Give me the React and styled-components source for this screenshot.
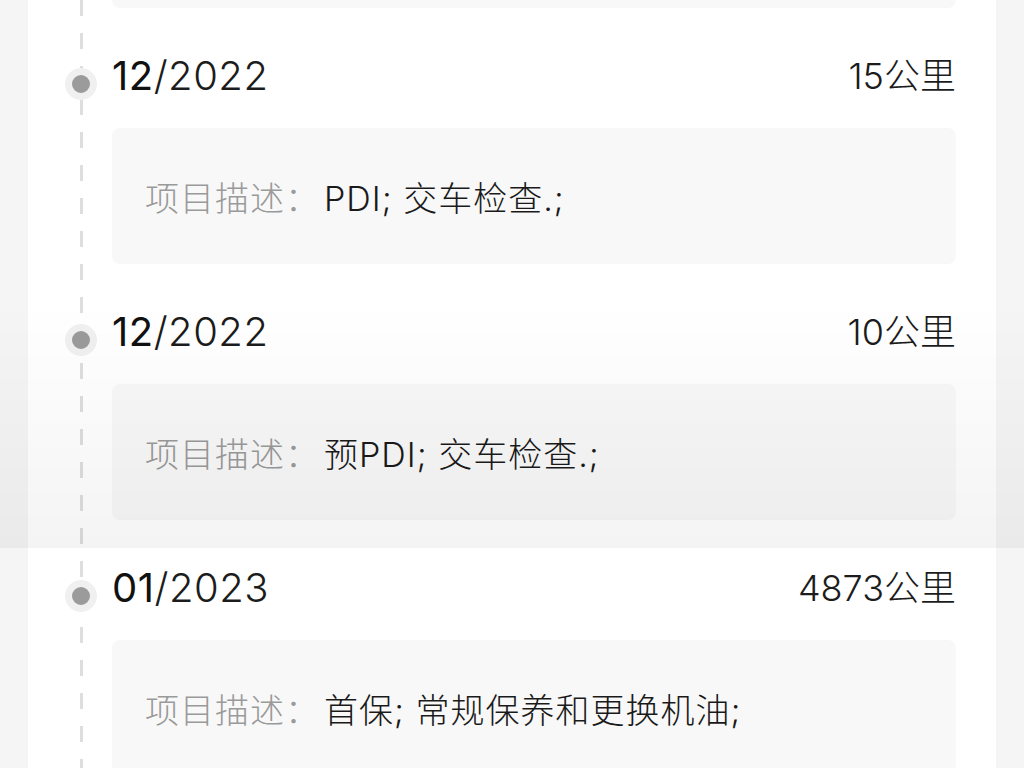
import React from "react";
import styled, { createGlobalStyle } from "styled-components";

const GlobalStyle = createGlobalStyle`
  html, body {
    margin: 0;
    background: #f5f5f5;
  }
  body {
    font-family: Inter, "Noto Sans CJK SC", sans-serif;
    overflow: hidden;
    -webkit-font-smoothing: antialiased;
  }
`;

const Page = styled.div`
  padding: 0 28px;
`;

/* White record card with the dashed timeline rail drawn as its background */
const Card = styled.div`
  padding: 0 40px 40px 37px;
  background-color: #fff;
  background-image: linear-gradient(#dedede 50%, transparent 50%);
  background-size: 3px 33px;
  background-position: 52px 0;
  background-repeat: repeat-y;
`;

/* Bottom edge of the record above, scrolled mostly out of view */
const PrevTail = styled.div`
  margin-left: 47px;
  height: 8px;
  background: #f8f8f8;
  border-radius: 0 0 8px 8px;
`;

const Entry = styled.section`
  display: grid;
  grid-template-columns: 32px 1fr;
  grid-template-rows: 56px 136px;
  column-gap: 15px;
  row-gap: 24px;
  padding-top: 40px;
`;

const Dot = styled.span`
  grid-column: 1;
  grid-row: 1;
  align-self: start;
  margin-top: 20px;
  width: 32px;
  height: 32px;
  box-sizing: border-box;
  border-radius: 50%;
  background: #9b9b9b;
  border: 7px solid #f0f0f0;
`;

const Header = styled.div`
  grid-column: 2;
  grid-row: 1;
  display: flex;
  align-items: center;
  justify-content: space-between;
  color: #1c1c1c;
`;

const DateText = styled.div`
  font-size: 40px;
  font-weight: 300;
  letter-spacing: 0.5px;
  line-height: 1;
`;

const Month = styled.span`
  font-weight: 400;
  color: #111;
`;

const Mileage = styled.div`
  font-size: 36px;
  font-weight: 300;
  line-height: 1;
`;

const Detail = styled.div`
  grid-column: 2;
  grid-row: 2;
  display: flex;
  align-items: center;
  padding: 0 33px;
  background: #f8f8f8;
  border-radius: 8px;
  font-size: 34px;
  font-weight: 300;
  letter-spacing: 1px;
`;

const Label = styled.span`
  color: #9a9a9a;
`;

const Value = styled.span`
  margin-left: 4px;
  color: #1a1a1a;
`;

const Shade = styled.div`
  position: fixed;
  left: 0;
  right: 0;
  top: 300px;
  height: 248px;
  background: linear-gradient(to bottom, rgba(0, 0, 0, 0), rgba(0, 0, 0, 0.045));
  pointer-events: none;
`;

const records = [
  { month: "12", year: "2022", km: "15", desc: "PDI; 交车检查.;" },
  { month: "12", year: "2022", km: "10", desc: "预PDI; 交车检查.;" },
  { month: "01", year: "2023", km: "4873", desc: "首保; 常规保养和更换机油;" },
];

export default function App() {
  return (
    <>
      <GlobalStyle />
      <Page>
        <Card>
          <PrevTail />
          {records.map((r, i) => (
            <Entry key={i}>
              <Dot />
              <Header>
                <DateText>
                  <Month>{r.month}</Month>/{r.year}
                </DateText>
                <Mileage>{r.km}公里</Mileage>
              </Header>
              <Detail>
                <Label>项目描述：</Label>
                <Value>{r.desc}</Value>
              </Detail>
            </Entry>
          ))}
        </Card>
      </Page>
      <Shade />
    </>
  );
}
